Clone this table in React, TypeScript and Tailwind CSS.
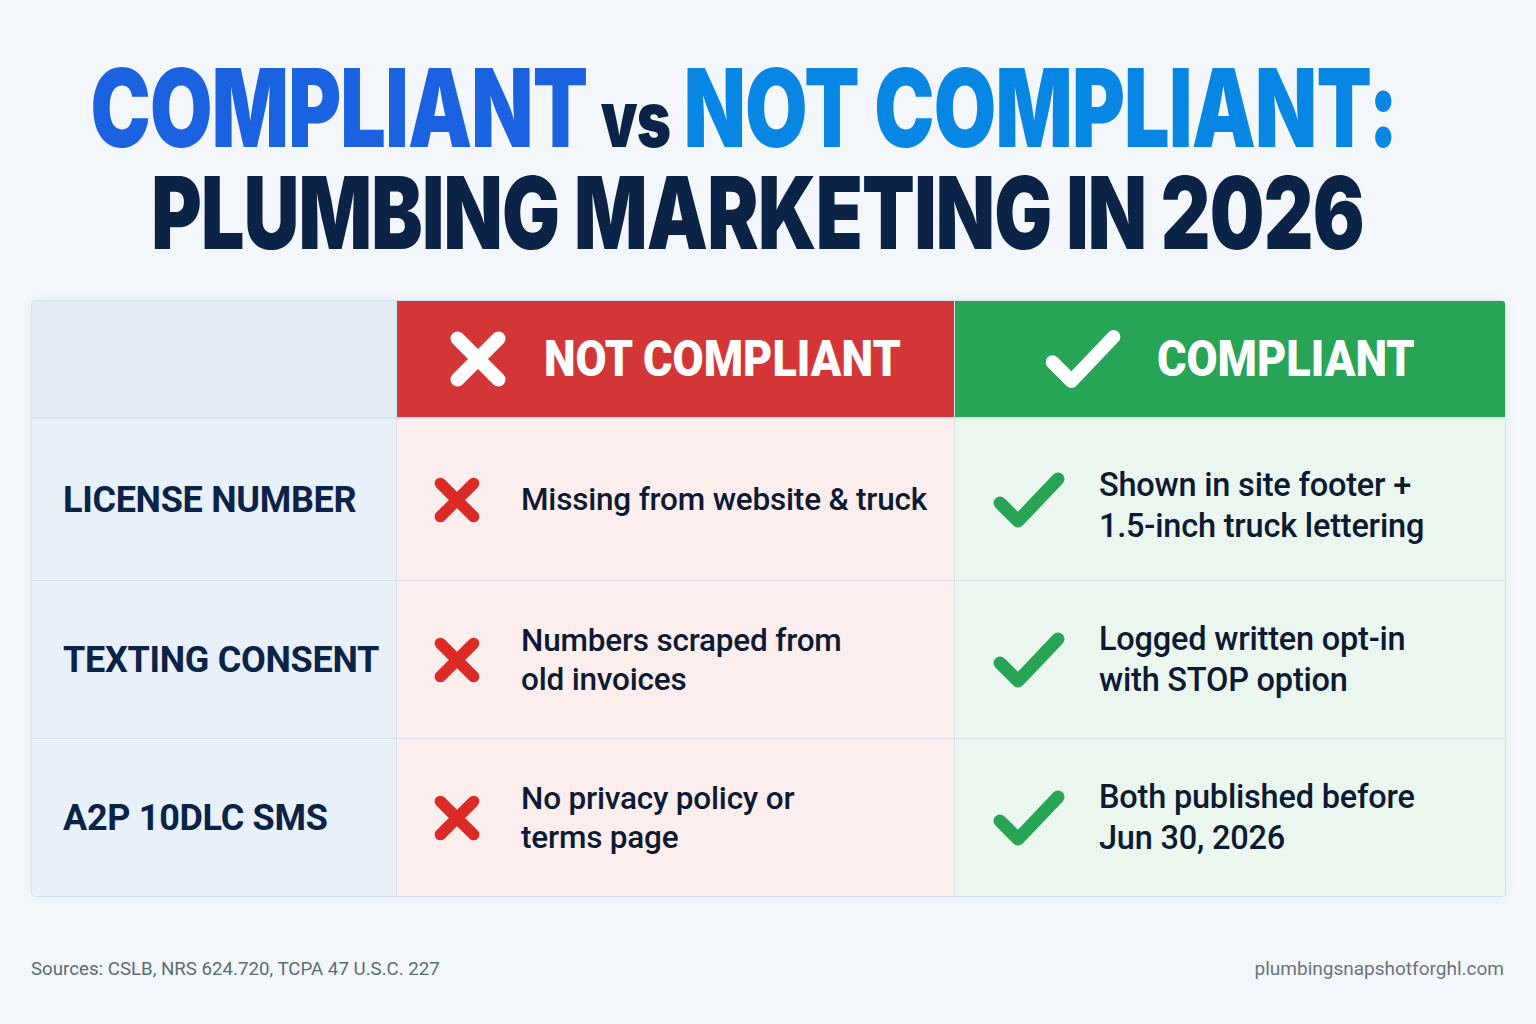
import React from 'react';

const XIcon = ({ className, stroke }: { className: string; stroke: number }) => (
  <svg viewBox="0 0 50 50" className={className}>
    <path d="M9 9 L41 41 M41 9 L9 41" stroke="currentColor" strokeWidth={stroke} strokeLinecap="round" fill="none" />
  </svg>
);

const CheckIcon = ({ className, stroke }: { className: string; stroke: number }) => (
  <svg viewBox="0 0 76 62" className={className}>
    <path d="M9 34 L27 52 L67 10" stroke="currentColor" strokeWidth={stroke} strokeLinecap="round" strokeLinejoin="round" fill="none" />
  </svg>
);

const rows = [
  {
    label: 'LICENSE NUMBER',
    bad: ['Missing from website & truck'],
    good: ['Shown in site footer +', '1.5-inch truck lettering'],
    h: 'h-[162px]',
    goodPad: 'pt-[12px]',
  },
  {
    label: 'TEXTING CONSENT',
    bad: ['Numbers scraped from', 'old invoices'],
    good: ['Logged written opt-in', 'with STOP option'],
    h: 'h-[158px]',
    goodPad: '',
  },
  {
    label: 'A2P 10DLC SMS',
    bad: ['No privacy policy or', 'terms page'],
    good: ['Both published before', 'Jun 30, 2026'],
    h: 'h-[157px]',
    goodPad: '',
  },
];

const App = () => {
  return (
    <div className="w-[1536px] h-[1024px] bg-[#f3f7fb] flex flex-col overflow-hidden" style={{ fontFamily: 'Roboto, "Liberation Sans", sans-serif' }}>
      {/* Title */}
      <div className="flex flex-col items-center pt-[63px] h-[300px]" style={{ fontFamily: 'Inter, Roboto, sans-serif' }}>
        <div className="inline-block scale-x-[0.747] translate-x-[-24px] origin-center whitespace-nowrap text-[108px] leading-[89px] font-black tracking-[-1px]">
          <span className="inline-block leading-[89px] text-[#1b62e0]">COMPLIANT</span>
          <span className="inline-block leading-[89px] text-[#0c2348] text-[78px] px-[18px]">vs</span>
          <span className="inline-block leading-[89px] text-[#0786e3]">NOT COMPLIANT:</span>
        </div>
        <div className="inline-block scale-x-[0.77] origin-center whitespace-nowrap text-[100px] leading-[100px] font-black tracking-[-1px] text-[#0c2348] ml-[-20px]">
          PLUMBING MARKETING IN 2026
        </div>
      </div>

      {/* Table */}
      <div className="mx-[31px] w-[1475px] rounded-[4px] overflow-hidden border border-[#d5e1ed] shadow-[0_0_12px_rgba(30,60,110,0.06)]">
        <div className="grid grid-cols-[365px_558px_552px] h-[118px] border-b-2 border-[#d5e1ed]">
          <div className="bg-[#e3ecf6] border-r border-[#d5e1ed]" />
          <div className="bg-[#d43638] flex items-center justify-center gap-[34px] border-r border-[#d5e1ed]">
            <XIcon className="w-[64px] h-[64px] text-white" stroke={11} />
            <span className="text-white text-[50px] font-black inline-block scale-x-[0.9] origin-left w-[362px] whitespace-nowrap">NOT COMPLIANT</span>
          </div>
          <div className="bg-[#27a455] flex items-center justify-center gap-[34px]">
            <CheckIcon className="w-[80px] h-[66px] text-white" stroke={13} />
            <span className="text-white text-[50px] font-black inline-block scale-x-[0.9] origin-left w-[262px] whitespace-nowrap">COMPLIANT</span>
          </div>
        </div>
        {rows.map((r, i) => (
          <div key={r.label} className={`grid grid-cols-[365px_558px_552px] ${r.h} ${i < rows.length - 1 ? 'border-b border-[#d5e1ed]' : ''}`}>
            <div className="bg-[#e8f0f9] border-r border-[#d5e1ed] flex items-center pl-[31px]">
              <span className="text-[#0c2348] text-[36px] font-bold whitespace-nowrap tracking-[-0.3px]">{r.label}</span>
            </div>
            <div className="bg-[#fdeeee] border-r border-[#d5e1ed] flex items-center pl-[34px] gap-[38px]">
              <XIcon className="w-[52px] h-[52px] text-[#dc2a26] shrink-0" stroke={11} />
              <div className="text-[#0d1a33] text-[31.5px] leading-[39px] font-medium tracking-[-0.2px]">
                {r.bad.map((t) => (
                  <div key={t} className="whitespace-nowrap">{t}</div>
                ))}
              </div>
            </div>
            <div className="bg-[#ebf6ee] flex items-center pl-[36px] gap-[32px]">
              <CheckIcon className="w-[76px] h-[62px] text-[#27a455] shrink-0" stroke={13} />
              <div className={`text-[#0d1a33] text-[32.5px] leading-[41px] font-medium tracking-[-0.2px] ${r.goodPad}`}>
                {r.good.map((t) => (
                  <div key={t} className="whitespace-nowrap">{t}</div>
                ))}
              </div>
            </div>
          </div>
        ))}
      </div>

      {/* Footer */}
      <div className="flex justify-between items-center mx-[31px] w-[1473px] mt-[58px]">
        <span className="text-[18.7px] text-[#5c6b78]">Sources: CSLB, NRS 624.720, TCPA 47 U.S.C. 227</span>
        <span className="text-[19px] text-[#6b7380]">plumbingsnapshotforghl.com</span>
      </div>
    </div>
  );
};

export default App;
